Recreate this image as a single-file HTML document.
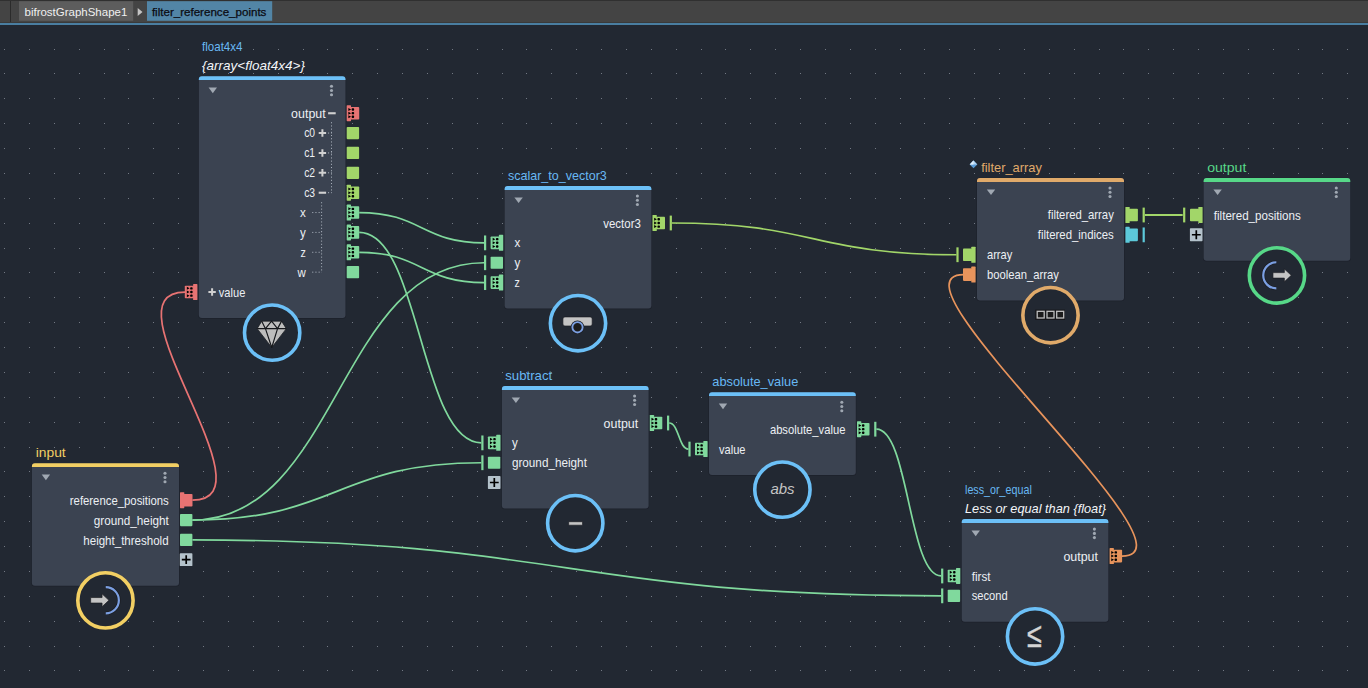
<!DOCTYPE html><html><head><meta charset="utf-8"><title>filter_reference_points</title>
<style>html,body{margin:0;padding:0;background:#222832;overflow:hidden}svg{display:block;font-family:"Liberation Sans",sans-serif}</style></head><body>
<svg width="1368" height="688" viewBox="0 0 1368 688">
<rect width="1368" height="688" fill="#222832"/>
<path d="M4 49.5h1M29 49.5h1M54 49.5h1M79 49.5h1M104 49.5h1M128 49.5h1M153 49.5h1M178 49.5h1M203 49.5h1M228 49.5h1M253 49.5h1M278 49.5h1M303 49.5h1M327 49.5h1M352 49.5h1M377 49.5h1M402 49.5h1M427 49.5h1M452 49.5h1M477 49.5h1M502 49.5h1M526 49.5h1M551 49.5h1M576 49.5h1M601 49.5h1M626 49.5h1M651 49.5h1M676 49.5h1M701 49.5h1M725 49.5h1M750 49.5h1M775 49.5h1M800 49.5h1M825 49.5h1M850 49.5h1M875 49.5h1M900 49.5h1M924 49.5h1M949 49.5h1M974 49.5h1M999 49.5h1M1024 49.5h1M1049 49.5h1M1074 49.5h1M1099 49.5h1M1123 49.5h1M1148 49.5h1M1173 49.5h1M1198 49.5h1M1223 49.5h1M1248 49.5h1M1273 49.5h1M1298 49.5h1M1322 49.5h1M1347 49.5h1M4 73.5h1M29 73.5h1M54 73.5h1M79 73.5h1M104 73.5h1M128 73.5h1M153 73.5h1M178 73.5h1M203 73.5h1M228 73.5h1M253 73.5h1M278 73.5h1M303 73.5h1M327 73.5h1M352 73.5h1M377 73.5h1M402 73.5h1M427 73.5h1M452 73.5h1M477 73.5h1M502 73.5h1M526 73.5h1M551 73.5h1M576 73.5h1M601 73.5h1M626 73.5h1M651 73.5h1M676 73.5h1M701 73.5h1M725 73.5h1M750 73.5h1M775 73.5h1M800 73.5h1M825 73.5h1M850 73.5h1M875 73.5h1M900 73.5h1M924 73.5h1M949 73.5h1M974 73.5h1M999 73.5h1M1024 73.5h1M1049 73.5h1M1074 73.5h1M1099 73.5h1M1123 73.5h1M1148 73.5h1M1173 73.5h1M1198 73.5h1M1223 73.5h1M1248 73.5h1M1273 73.5h1M1298 73.5h1M1322 73.5h1M1347 73.5h1M4 98.5h1M29 98.5h1M54 98.5h1M79 98.5h1M104 98.5h1M128 98.5h1M153 98.5h1M178 98.5h1M203 98.5h1M228 98.5h1M253 98.5h1M278 98.5h1M303 98.5h1M327 98.5h1M352 98.5h1M377 98.5h1M402 98.5h1M427 98.5h1M452 98.5h1M477 98.5h1M502 98.5h1M526 98.5h1M551 98.5h1M576 98.5h1M601 98.5h1M626 98.5h1M651 98.5h1M676 98.5h1M701 98.5h1M725 98.5h1M750 98.5h1M775 98.5h1M800 98.5h1M825 98.5h1M850 98.5h1M875 98.5h1M900 98.5h1M924 98.5h1M949 98.5h1M974 98.5h1M999 98.5h1M1024 98.5h1M1049 98.5h1M1074 98.5h1M1099 98.5h1M1123 98.5h1M1148 98.5h1M1173 98.5h1M1198 98.5h1M1223 98.5h1M1248 98.5h1M1273 98.5h1M1298 98.5h1M1322 98.5h1M1347 98.5h1M4 123.5h1M29 123.5h1M54 123.5h1M79 123.5h1M104 123.5h1M128 123.5h1M153 123.5h1M178 123.5h1M203 123.5h1M228 123.5h1M253 123.5h1M278 123.5h1M303 123.5h1M327 123.5h1M352 123.5h1M377 123.5h1M402 123.5h1M427 123.5h1M452 123.5h1M477 123.5h1M502 123.5h1M526 123.5h1M551 123.5h1M576 123.5h1M601 123.5h1M626 123.5h1M651 123.5h1M676 123.5h1M701 123.5h1M725 123.5h1M750 123.5h1M775 123.5h1M800 123.5h1M825 123.5h1M850 123.5h1M875 123.5h1M900 123.5h1M924 123.5h1M949 123.5h1M974 123.5h1M999 123.5h1M1024 123.5h1M1049 123.5h1M1074 123.5h1M1099 123.5h1M1123 123.5h1M1148 123.5h1M1173 123.5h1M1198 123.5h1M1223 123.5h1M1248 123.5h1M1273 123.5h1M1298 123.5h1M1322 123.5h1M1347 123.5h1M4 148.5h1M29 148.5h1M54 148.5h1M79 148.5h1M104 148.5h1M128 148.5h1M153 148.5h1M178 148.5h1M203 148.5h1M228 148.5h1M253 148.5h1M278 148.5h1M303 148.5h1M327 148.5h1M352 148.5h1M377 148.5h1M402 148.5h1M427 148.5h1M452 148.5h1M477 148.5h1M502 148.5h1M526 148.5h1M551 148.5h1M576 148.5h1M601 148.5h1M626 148.5h1M651 148.5h1M676 148.5h1M701 148.5h1M725 148.5h1M750 148.5h1M775 148.5h1M800 148.5h1M825 148.5h1M850 148.5h1M875 148.5h1M900 148.5h1M924 148.5h1M949 148.5h1M974 148.5h1M999 148.5h1M1024 148.5h1M1049 148.5h1M1074 148.5h1M1099 148.5h1M1123 148.5h1M1148 148.5h1M1173 148.5h1M1198 148.5h1M1223 148.5h1M1248 148.5h1M1273 148.5h1M1298 148.5h1M1322 148.5h1M1347 148.5h1M4 173.5h1M29 173.5h1M54 173.5h1M79 173.5h1M104 173.5h1M128 173.5h1M153 173.5h1M178 173.5h1M203 173.5h1M228 173.5h1M253 173.5h1M278 173.5h1M303 173.5h1M327 173.5h1M352 173.5h1M377 173.5h1M402 173.5h1M427 173.5h1M452 173.5h1M477 173.5h1M502 173.5h1M526 173.5h1M551 173.5h1M576 173.5h1M601 173.5h1M626 173.5h1M651 173.5h1M676 173.5h1M701 173.5h1M725 173.5h1M750 173.5h1M775 173.5h1M800 173.5h1M825 173.5h1M850 173.5h1M875 173.5h1M900 173.5h1M924 173.5h1M949 173.5h1M974 173.5h1M999 173.5h1M1024 173.5h1M1049 173.5h1M1074 173.5h1M1099 173.5h1M1123 173.5h1M1148 173.5h1M1173 173.5h1M1198 173.5h1M1223 173.5h1M1248 173.5h1M1273 173.5h1M1298 173.5h1M1322 173.5h1M1347 173.5h1M4 198.5h1M29 198.5h1M54 198.5h1M79 198.5h1M104 198.5h1M128 198.5h1M153 198.5h1M178 198.5h1M203 198.5h1M228 198.5h1M253 198.5h1M278 198.5h1M303 198.5h1M327 198.5h1M352 198.5h1M377 198.5h1M402 198.5h1M427 198.5h1M452 198.5h1M477 198.5h1M502 198.5h1M526 198.5h1M551 198.5h1M576 198.5h1M601 198.5h1M626 198.5h1M651 198.5h1M676 198.5h1M701 198.5h1M725 198.5h1M750 198.5h1M775 198.5h1M800 198.5h1M825 198.5h1M850 198.5h1M875 198.5h1M900 198.5h1M924 198.5h1M949 198.5h1M974 198.5h1M999 198.5h1M1024 198.5h1M1049 198.5h1M1074 198.5h1M1099 198.5h1M1123 198.5h1M1148 198.5h1M1173 198.5h1M1198 198.5h1M1223 198.5h1M1248 198.5h1M1273 198.5h1M1298 198.5h1M1322 198.5h1M1347 198.5h1M4 223.5h1M29 223.5h1M54 223.5h1M79 223.5h1M104 223.5h1M128 223.5h1M153 223.5h1M178 223.5h1M203 223.5h1M228 223.5h1M253 223.5h1M278 223.5h1M303 223.5h1M327 223.5h1M352 223.5h1M377 223.5h1M402 223.5h1M427 223.5h1M452 223.5h1M477 223.5h1M502 223.5h1M526 223.5h1M551 223.5h1M576 223.5h1M601 223.5h1M626 223.5h1M651 223.5h1M676 223.5h1M701 223.5h1M725 223.5h1M750 223.5h1M775 223.5h1M800 223.5h1M825 223.5h1M850 223.5h1M875 223.5h1M900 223.5h1M924 223.5h1M949 223.5h1M974 223.5h1M999 223.5h1M1024 223.5h1M1049 223.5h1M1074 223.5h1M1099 223.5h1M1123 223.5h1M1148 223.5h1M1173 223.5h1M1198 223.5h1M1223 223.5h1M1248 223.5h1M1273 223.5h1M1298 223.5h1M1322 223.5h1M1347 223.5h1M4 248.5h1M29 248.5h1M54 248.5h1M79 248.5h1M104 248.5h1M128 248.5h1M153 248.5h1M178 248.5h1M203 248.5h1M228 248.5h1M253 248.5h1M278 248.5h1M303 248.5h1M327 248.5h1M352 248.5h1M377 248.5h1M402 248.5h1M427 248.5h1M452 248.5h1M477 248.5h1M502 248.5h1M526 248.5h1M551 248.5h1M576 248.5h1M601 248.5h1M626 248.5h1M651 248.5h1M676 248.5h1M701 248.5h1M725 248.5h1M750 248.5h1M775 248.5h1M800 248.5h1M825 248.5h1M850 248.5h1M875 248.5h1M900 248.5h1M924 248.5h1M949 248.5h1M974 248.5h1M999 248.5h1M1024 248.5h1M1049 248.5h1M1074 248.5h1M1099 248.5h1M1123 248.5h1M1148 248.5h1M1173 248.5h1M1198 248.5h1M1223 248.5h1M1248 248.5h1M1273 248.5h1M1298 248.5h1M1322 248.5h1M1347 248.5h1M4 272.5h1M29 272.5h1M54 272.5h1M79 272.5h1M104 272.5h1M128 272.5h1M153 272.5h1M178 272.5h1M203 272.5h1M228 272.5h1M253 272.5h1M278 272.5h1M303 272.5h1M327 272.5h1M352 272.5h1M377 272.5h1M402 272.5h1M427 272.5h1M452 272.5h1M477 272.5h1M502 272.5h1M526 272.5h1M551 272.5h1M576 272.5h1M601 272.5h1M626 272.5h1M651 272.5h1M676 272.5h1M701 272.5h1M725 272.5h1M750 272.5h1M775 272.5h1M800 272.5h1M825 272.5h1M850 272.5h1M875 272.5h1M900 272.5h1M924 272.5h1M949 272.5h1M974 272.5h1M999 272.5h1M1024 272.5h1M1049 272.5h1M1074 272.5h1M1099 272.5h1M1123 272.5h1M1148 272.5h1M1173 272.5h1M1198 272.5h1M1223 272.5h1M1248 272.5h1M1273 272.5h1M1298 272.5h1M1322 272.5h1M1347 272.5h1M4 297.5h1M29 297.5h1M54 297.5h1M79 297.5h1M104 297.5h1M128 297.5h1M153 297.5h1M178 297.5h1M203 297.5h1M228 297.5h1M253 297.5h1M278 297.5h1M303 297.5h1M327 297.5h1M352 297.5h1M377 297.5h1M402 297.5h1M427 297.5h1M452 297.5h1M477 297.5h1M502 297.5h1M526 297.5h1M551 297.5h1M576 297.5h1M601 297.5h1M626 297.5h1M651 297.5h1M676 297.5h1M701 297.5h1M725 297.5h1M750 297.5h1M775 297.5h1M800 297.5h1M825 297.5h1M850 297.5h1M875 297.5h1M900 297.5h1M924 297.5h1M949 297.5h1M974 297.5h1M999 297.5h1M1024 297.5h1M1049 297.5h1M1074 297.5h1M1099 297.5h1M1123 297.5h1M1148 297.5h1M1173 297.5h1M1198 297.5h1M1223 297.5h1M1248 297.5h1M1273 297.5h1M1298 297.5h1M1322 297.5h1M1347 297.5h1M4 322.5h1M29 322.5h1M54 322.5h1M79 322.5h1M104 322.5h1M128 322.5h1M153 322.5h1M178 322.5h1M203 322.5h1M228 322.5h1M253 322.5h1M278 322.5h1M303 322.5h1M327 322.5h1M352 322.5h1M377 322.5h1M402 322.5h1M427 322.5h1M452 322.5h1M477 322.5h1M502 322.5h1M526 322.5h1M551 322.5h1M576 322.5h1M601 322.5h1M626 322.5h1M651 322.5h1M676 322.5h1M701 322.5h1M725 322.5h1M750 322.5h1M775 322.5h1M800 322.5h1M825 322.5h1M850 322.5h1M875 322.5h1M900 322.5h1M924 322.5h1M949 322.5h1M974 322.5h1M999 322.5h1M1024 322.5h1M1049 322.5h1M1074 322.5h1M1099 322.5h1M1123 322.5h1M1148 322.5h1M1173 322.5h1M1198 322.5h1M1223 322.5h1M1248 322.5h1M1273 322.5h1M1298 322.5h1M1322 322.5h1M1347 322.5h1M4 347.5h1M29 347.5h1M54 347.5h1M79 347.5h1M104 347.5h1M128 347.5h1M153 347.5h1M178 347.5h1M203 347.5h1M228 347.5h1M253 347.5h1M278 347.5h1M303 347.5h1M327 347.5h1M352 347.5h1M377 347.5h1M402 347.5h1M427 347.5h1M452 347.5h1M477 347.5h1M502 347.5h1M526 347.5h1M551 347.5h1M576 347.5h1M601 347.5h1M626 347.5h1M651 347.5h1M676 347.5h1M701 347.5h1M725 347.5h1M750 347.5h1M775 347.5h1M800 347.5h1M825 347.5h1M850 347.5h1M875 347.5h1M900 347.5h1M924 347.5h1M949 347.5h1M974 347.5h1M999 347.5h1M1024 347.5h1M1049 347.5h1M1074 347.5h1M1099 347.5h1M1123 347.5h1M1148 347.5h1M1173 347.5h1M1198 347.5h1M1223 347.5h1M1248 347.5h1M1273 347.5h1M1298 347.5h1M1322 347.5h1M1347 347.5h1M4 372.5h1M29 372.5h1M54 372.5h1M79 372.5h1M104 372.5h1M128 372.5h1M153 372.5h1M178 372.5h1M203 372.5h1M228 372.5h1M253 372.5h1M278 372.5h1M303 372.5h1M327 372.5h1M352 372.5h1M377 372.5h1M402 372.5h1M427 372.5h1M452 372.5h1M477 372.5h1M502 372.5h1M526 372.5h1M551 372.5h1M576 372.5h1M601 372.5h1M626 372.5h1M651 372.5h1M676 372.5h1M701 372.5h1M725 372.5h1M750 372.5h1M775 372.5h1M800 372.5h1M825 372.5h1M850 372.5h1M875 372.5h1M900 372.5h1M924 372.5h1M949 372.5h1M974 372.5h1M999 372.5h1M1024 372.5h1M1049 372.5h1M1074 372.5h1M1099 372.5h1M1123 372.5h1M1148 372.5h1M1173 372.5h1M1198 372.5h1M1223 372.5h1M1248 372.5h1M1273 372.5h1M1298 372.5h1M1322 372.5h1M1347 372.5h1M4 397.5h1M29 397.5h1M54 397.5h1M79 397.5h1M104 397.5h1M128 397.5h1M153 397.5h1M178 397.5h1M203 397.5h1M228 397.5h1M253 397.5h1M278 397.5h1M303 397.5h1M327 397.5h1M352 397.5h1M377 397.5h1M402 397.5h1M427 397.5h1M452 397.5h1M477 397.5h1M502 397.5h1M526 397.5h1M551 397.5h1M576 397.5h1M601 397.5h1M626 397.5h1M651 397.5h1M676 397.5h1M701 397.5h1M725 397.5h1M750 397.5h1M775 397.5h1M800 397.5h1M825 397.5h1M850 397.5h1M875 397.5h1M900 397.5h1M924 397.5h1M949 397.5h1M974 397.5h1M999 397.5h1M1024 397.5h1M1049 397.5h1M1074 397.5h1M1099 397.5h1M1123 397.5h1M1148 397.5h1M1173 397.5h1M1198 397.5h1M1223 397.5h1M1248 397.5h1M1273 397.5h1M1298 397.5h1M1322 397.5h1M1347 397.5h1M4 422.5h1M29 422.5h1M54 422.5h1M79 422.5h1M104 422.5h1M128 422.5h1M153 422.5h1M178 422.5h1M203 422.5h1M228 422.5h1M253 422.5h1M278 422.5h1M303 422.5h1M327 422.5h1M352 422.5h1M377 422.5h1M402 422.5h1M427 422.5h1M452 422.5h1M477 422.5h1M502 422.5h1M526 422.5h1M551 422.5h1M576 422.5h1M601 422.5h1M626 422.5h1M651 422.5h1M676 422.5h1M701 422.5h1M725 422.5h1M750 422.5h1M775 422.5h1M800 422.5h1M825 422.5h1M850 422.5h1M875 422.5h1M900 422.5h1M924 422.5h1M949 422.5h1M974 422.5h1M999 422.5h1M1024 422.5h1M1049 422.5h1M1074 422.5h1M1099 422.5h1M1123 422.5h1M1148 422.5h1M1173 422.5h1M1198 422.5h1M1223 422.5h1M1248 422.5h1M1273 422.5h1M1298 422.5h1M1322 422.5h1M1347 422.5h1M4 447.5h1M29 447.5h1M54 447.5h1M79 447.5h1M104 447.5h1M128 447.5h1M153 447.5h1M178 447.5h1M203 447.5h1M228 447.5h1M253 447.5h1M278 447.5h1M303 447.5h1M327 447.5h1M352 447.5h1M377 447.5h1M402 447.5h1M427 447.5h1M452 447.5h1M477 447.5h1M502 447.5h1M526 447.5h1M551 447.5h1M576 447.5h1M601 447.5h1M626 447.5h1M651 447.5h1M676 447.5h1M701 447.5h1M725 447.5h1M750 447.5h1M775 447.5h1M800 447.5h1M825 447.5h1M850 447.5h1M875 447.5h1M900 447.5h1M924 447.5h1M949 447.5h1M974 447.5h1M999 447.5h1M1024 447.5h1M1049 447.5h1M1074 447.5h1M1099 447.5h1M1123 447.5h1M1148 447.5h1M1173 447.5h1M1198 447.5h1M1223 447.5h1M1248 447.5h1M1273 447.5h1M1298 447.5h1M1322 447.5h1M1347 447.5h1M4 471.5h1M29 471.5h1M54 471.5h1M79 471.5h1M104 471.5h1M128 471.5h1M153 471.5h1M178 471.5h1M203 471.5h1M228 471.5h1M253 471.5h1M278 471.5h1M303 471.5h1M327 471.5h1M352 471.5h1M377 471.5h1M402 471.5h1M427 471.5h1M452 471.5h1M477 471.5h1M502 471.5h1M526 471.5h1M551 471.5h1M576 471.5h1M601 471.5h1M626 471.5h1M651 471.5h1M676 471.5h1M701 471.5h1M725 471.5h1M750 471.5h1M775 471.5h1M800 471.5h1M825 471.5h1M850 471.5h1M875 471.5h1M900 471.5h1M924 471.5h1M949 471.5h1M974 471.5h1M999 471.5h1M1024 471.5h1M1049 471.5h1M1074 471.5h1M1099 471.5h1M1123 471.5h1M1148 471.5h1M1173 471.5h1M1198 471.5h1M1223 471.5h1M1248 471.5h1M1273 471.5h1M1298 471.5h1M1322 471.5h1M1347 471.5h1M4 496.5h1M29 496.5h1M54 496.5h1M79 496.5h1M104 496.5h1M128 496.5h1M153 496.5h1M178 496.5h1M203 496.5h1M228 496.5h1M253 496.5h1M278 496.5h1M303 496.5h1M327 496.5h1M352 496.5h1M377 496.5h1M402 496.5h1M427 496.5h1M452 496.5h1M477 496.5h1M502 496.5h1M526 496.5h1M551 496.5h1M576 496.5h1M601 496.5h1M626 496.5h1M651 496.5h1M676 496.5h1M701 496.5h1M725 496.5h1M750 496.5h1M775 496.5h1M800 496.5h1M825 496.5h1M850 496.5h1M875 496.5h1M900 496.5h1M924 496.5h1M949 496.5h1M974 496.5h1M999 496.5h1M1024 496.5h1M1049 496.5h1M1074 496.5h1M1099 496.5h1M1123 496.5h1M1148 496.5h1M1173 496.5h1M1198 496.5h1M1223 496.5h1M1248 496.5h1M1273 496.5h1M1298 496.5h1M1322 496.5h1M1347 496.5h1M4 521.5h1M29 521.5h1M54 521.5h1M79 521.5h1M104 521.5h1M128 521.5h1M153 521.5h1M178 521.5h1M203 521.5h1M228 521.5h1M253 521.5h1M278 521.5h1M303 521.5h1M327 521.5h1M352 521.5h1M377 521.5h1M402 521.5h1M427 521.5h1M452 521.5h1M477 521.5h1M502 521.5h1M526 521.5h1M551 521.5h1M576 521.5h1M601 521.5h1M626 521.5h1M651 521.5h1M676 521.5h1M701 521.5h1M725 521.5h1M750 521.5h1M775 521.5h1M800 521.5h1M825 521.5h1M850 521.5h1M875 521.5h1M900 521.5h1M924 521.5h1M949 521.5h1M974 521.5h1M999 521.5h1M1024 521.5h1M1049 521.5h1M1074 521.5h1M1099 521.5h1M1123 521.5h1M1148 521.5h1M1173 521.5h1M1198 521.5h1M1223 521.5h1M1248 521.5h1M1273 521.5h1M1298 521.5h1M1322 521.5h1M1347 521.5h1M4 546.5h1M29 546.5h1M54 546.5h1M79 546.5h1M104 546.5h1M128 546.5h1M153 546.5h1M178 546.5h1M203 546.5h1M228 546.5h1M253 546.5h1M278 546.5h1M303 546.5h1M327 546.5h1M352 546.5h1M377 546.5h1M402 546.5h1M427 546.5h1M452 546.5h1M477 546.5h1M502 546.5h1M526 546.5h1M551 546.5h1M576 546.5h1M601 546.5h1M626 546.5h1M651 546.5h1M676 546.5h1M701 546.5h1M725 546.5h1M750 546.5h1M775 546.5h1M800 546.5h1M825 546.5h1M850 546.5h1M875 546.5h1M900 546.5h1M924 546.5h1M949 546.5h1M974 546.5h1M999 546.5h1M1024 546.5h1M1049 546.5h1M1074 546.5h1M1099 546.5h1M1123 546.5h1M1148 546.5h1M1173 546.5h1M1198 546.5h1M1223 546.5h1M1248 546.5h1M1273 546.5h1M1298 546.5h1M1322 546.5h1M1347 546.5h1M4 571.5h1M29 571.5h1M54 571.5h1M79 571.5h1M104 571.5h1M128 571.5h1M153 571.5h1M178 571.5h1M203 571.5h1M228 571.5h1M253 571.5h1M278 571.5h1M303 571.5h1M327 571.5h1M352 571.5h1M377 571.5h1M402 571.5h1M427 571.5h1M452 571.5h1M477 571.5h1M502 571.5h1M526 571.5h1M551 571.5h1M576 571.5h1M601 571.5h1M626 571.5h1M651 571.5h1M676 571.5h1M701 571.5h1M725 571.5h1M750 571.5h1M775 571.5h1M800 571.5h1M825 571.5h1M850 571.5h1M875 571.5h1M900 571.5h1M924 571.5h1M949 571.5h1M974 571.5h1M999 571.5h1M1024 571.5h1M1049 571.5h1M1074 571.5h1M1099 571.5h1M1123 571.5h1M1148 571.5h1M1173 571.5h1M1198 571.5h1M1223 571.5h1M1248 571.5h1M1273 571.5h1M1298 571.5h1M1322 571.5h1M1347 571.5h1M4 596.5h1M29 596.5h1M54 596.5h1M79 596.5h1M104 596.5h1M128 596.5h1M153 596.5h1M178 596.5h1M203 596.5h1M228 596.5h1M253 596.5h1M278 596.5h1M303 596.5h1M327 596.5h1M352 596.5h1M377 596.5h1M402 596.5h1M427 596.5h1M452 596.5h1M477 596.5h1M502 596.5h1M526 596.5h1M551 596.5h1M576 596.5h1M601 596.5h1M626 596.5h1M651 596.5h1M676 596.5h1M701 596.5h1M725 596.5h1M750 596.5h1M775 596.5h1M800 596.5h1M825 596.5h1M850 596.5h1M875 596.5h1M900 596.5h1M924 596.5h1M949 596.5h1M974 596.5h1M999 596.5h1M1024 596.5h1M1049 596.5h1M1074 596.5h1M1099 596.5h1M1123 596.5h1M1148 596.5h1M1173 596.5h1M1198 596.5h1M1223 596.5h1M1248 596.5h1M1273 596.5h1M1298 596.5h1M1322 596.5h1M1347 596.5h1M4 621.5h1M29 621.5h1M54 621.5h1M79 621.5h1M104 621.5h1M128 621.5h1M153 621.5h1M178 621.5h1M203 621.5h1M228 621.5h1M253 621.5h1M278 621.5h1M303 621.5h1M327 621.5h1M352 621.5h1M377 621.5h1M402 621.5h1M427 621.5h1M452 621.5h1M477 621.5h1M502 621.5h1M526 621.5h1M551 621.5h1M576 621.5h1M601 621.5h1M626 621.5h1M651 621.5h1M676 621.5h1M701 621.5h1M725 621.5h1M750 621.5h1M775 621.5h1M800 621.5h1M825 621.5h1M850 621.5h1M875 621.5h1M900 621.5h1M924 621.5h1M949 621.5h1M974 621.5h1M999 621.5h1M1024 621.5h1M1049 621.5h1M1074 621.5h1M1099 621.5h1M1123 621.5h1M1148 621.5h1M1173 621.5h1M1198 621.5h1M1223 621.5h1M1248 621.5h1M1273 621.5h1M1298 621.5h1M1322 621.5h1M1347 621.5h1M4 646.5h1M29 646.5h1M54 646.5h1M79 646.5h1M104 646.5h1M128 646.5h1M153 646.5h1M178 646.5h1M203 646.5h1M228 646.5h1M253 646.5h1M278 646.5h1M303 646.5h1M327 646.5h1M352 646.5h1M377 646.5h1M402 646.5h1M427 646.5h1M452 646.5h1M477 646.5h1M502 646.5h1M526 646.5h1M551 646.5h1M576 646.5h1M601 646.5h1M626 646.5h1M651 646.5h1M676 646.5h1M701 646.5h1M725 646.5h1M750 646.5h1M775 646.5h1M800 646.5h1M825 646.5h1M850 646.5h1M875 646.5h1M900 646.5h1M924 646.5h1M949 646.5h1M974 646.5h1M999 646.5h1M1024 646.5h1M1049 646.5h1M1074 646.5h1M1099 646.5h1M1123 646.5h1M1148 646.5h1M1173 646.5h1M1198 646.5h1M1223 646.5h1M1248 646.5h1M1273 646.5h1M1298 646.5h1M1322 646.5h1M1347 646.5h1M4 670.5h1M29 670.5h1M54 670.5h1M79 670.5h1M104 670.5h1M128 670.5h1M153 670.5h1M178 670.5h1M203 670.5h1M228 670.5h1M253 670.5h1M278 670.5h1M303 670.5h1M327 670.5h1M352 670.5h1M377 670.5h1M402 670.5h1M427 670.5h1M452 670.5h1M477 670.5h1M502 670.5h1M526 670.5h1M551 670.5h1M576 670.5h1M601 670.5h1M626 670.5h1M651 670.5h1M676 670.5h1M701 670.5h1M725 670.5h1M750 670.5h1M775 670.5h1M800 670.5h1M825 670.5h1M850 670.5h1M875 670.5h1M900 670.5h1M924 670.5h1M949 670.5h1M974 670.5h1M999 670.5h1M1024 670.5h1M1049 670.5h1M1074 670.5h1M1099 670.5h1M1123 670.5h1M1148 670.5h1M1173 670.5h1M1198 670.5h1M1223 670.5h1M1248 670.5h1M1273 670.5h1M1298 670.5h1M1322 670.5h1M1347 670.5h1" stroke="#737984" stroke-width="1" fill="none" shape-rendering="crispEdges"/>
<path d="M192.40 500.20C277.40 500.20 100.00 292.03 185.00 292.03" stroke="#e87373" stroke-width="1.7" fill="none"/>
<path d="M359.20 212.55C421.60 212.55 421.60 242.87 484.00 242.87" stroke="#80d99d" stroke-width="1.7" fill="none"/>
<path d="M359.20 232.42C420.25 232.42 420.25 442.87 481.30 442.87" stroke="#80d99d" stroke-width="1.7" fill="none"/>
<path d="M359.20 252.29C421.60 252.29 421.60 282.61 484.00 282.61" stroke="#80d99d" stroke-width="1.7" fill="none"/>
<path d="M192.40 520.07C338.20 520.07 338.20 262.74 484.00 262.74" stroke="#80d99d" stroke-width="1.7" fill="none"/>
<path d="M192.40 520.07C336.85 520.07 336.85 462.74 481.30 462.74" stroke="#80d99d" stroke-width="1.7" fill="none"/>
<path d="M192.40 539.94C566.75 539.94 566.75 595.84 941.10 595.84" stroke="#80d99d" stroke-width="1.7" fill="none"/>
<path d="M671.90 223.00C814.15 223.00 814.15 254.74 956.40 254.74" stroke="#a2d669" stroke-width="1.7" fill="none"/>
<path d="M669.20 423.00C678.80 423.00 678.80 449.07 688.40 449.07" stroke="#80d99d" stroke-width="1.7" fill="none"/>
<path d="M876.40 429.20C908.75 429.20 908.75 575.97 941.10 575.97" stroke="#80d99d" stroke-width="1.7" fill="none"/>
<path d="M1122.00 556.10C1208.00 556.10 877.50 274.61 963.50 274.61" stroke="#e8945c" stroke-width="1.7" fill="none"/>
<path d="M1144.8 215.00H1182.7" stroke="#a2d669" stroke-width="1.9" fill="none"/>
<rect x="198.20" y="75.90" width="147.90" height="242.83" rx="3.5" fill="#1d212b"/>
<rect x="198.80" y="76.20" width="146.70" height="241.83" rx="3" fill="#3b4351"/>
<path d="M198.80 80.10V79.20A3 3 0 0 1 201.80 76.20H342.50A3 3 0 0 1 345.50 79.20V80.10Z" fill="#6cc0f7"/>
<path d="M208.60 87.60h8.4l-4.2 5.7z" fill="#a0a8b2"/>
<circle cx="331.50" cy="86.20" r="1.55" fill="#a0a8b2"/>
<circle cx="331.50" cy="90.50" r="1.55" fill="#a0a8b2"/>
<circle cx="331.50" cy="94.70" r="1.55" fill="#a0a8b2"/>
<text x="202.10" y="51.00" font-size="12.2" fill="#68b8f4" textLength="40.30" lengthAdjust="spacingAndGlyphs">float4x4</text>
<text x="202.10" y="70.00" font-size="12.7" fill="#f4f6f9" font-style="italic" textLength="102.80" lengthAdjust="spacingAndGlyphs">{array&lt;float4x4&gt;}</text>
<text x="291.10" y="118.00" font-size="12.2" fill="#eceff3" textLength="34.60" lengthAdjust="spacingAndGlyphs">output</text>
<rect x="328.1" y="112.20" width="7.6" height="2.1" fill="#d0d0d0"/>
<text x="304.20" y="137.00" font-size="12.2" fill="#eceff3" textLength="10.90" lengthAdjust="spacingAndGlyphs">c0</text>
<path d="M318.7 133.07h7.4M322.4 129.37v7.4" stroke="#d0d0d0" stroke-width="2" fill="none"/>
<path d="M328 133.07H332" stroke="#a6aeb9" stroke-width="1" stroke-dasharray="1.1 2.1" fill="none"/>
<text x="304.20" y="157.00" font-size="12.2" fill="#eceff3" textLength="10.90" lengthAdjust="spacingAndGlyphs">c1</text>
<path d="M318.7 152.94h7.4M322.4 149.24v7.4" stroke="#d0d0d0" stroke-width="2" fill="none"/>
<path d="M328 152.94H332" stroke="#a6aeb9" stroke-width="1" stroke-dasharray="1.1 2.1" fill="none"/>
<text x="304.20" y="177.00" font-size="12.2" fill="#eceff3" textLength="10.90" lengthAdjust="spacingAndGlyphs">c2</text>
<path d="M318.7 172.81h7.4M322.4 169.11v7.4" stroke="#d0d0d0" stroke-width="2" fill="none"/>
<path d="M328 172.81H332" stroke="#a6aeb9" stroke-width="1" stroke-dasharray="1.1 2.1" fill="none"/>
<text x="304.20" y="197.00" font-size="12.2" fill="#eceff3" textLength="10.90" lengthAdjust="spacingAndGlyphs">c3</text>
<rect x="318.7" y="191.68" width="7.4" height="2.1" fill="#d0d0d0"/>
<path d="M328 192.68H332" stroke="#a6aeb9" stroke-width="1" stroke-dasharray="1.1 2.1" fill="none"/>
<path d="M331.5 122.20V192.68" stroke="#a6aeb9" stroke-width="1" stroke-dasharray="1.1 2.1" fill="none"/>
<text x="300.10" y="217.00" font-size="12.2" fill="#eceff3" textLength="5.80" lengthAdjust="spacingAndGlyphs">x</text>
<path d="M312.2 212.55H322" stroke="#a6aeb9" stroke-width="1" stroke-dasharray="1.1 2.1" fill="none"/>
<text x="300.10" y="237.00" font-size="12.2" fill="#eceff3" textLength="5.80" lengthAdjust="spacingAndGlyphs">y</text>
<path d="M312.2 232.42H322" stroke="#a6aeb9" stroke-width="1" stroke-dasharray="1.1 2.1" fill="none"/>
<text x="300.60" y="257.00" font-size="12.2" fill="#eceff3" textLength="5.30" lengthAdjust="spacingAndGlyphs">z</text>
<path d="M312.2 252.29H322" stroke="#a6aeb9" stroke-width="1" stroke-dasharray="1.1 2.1" fill="none"/>
<text x="297.60" y="277.00" font-size="12.2" fill="#eceff3" textLength="8.30" lengthAdjust="spacingAndGlyphs">w</text>
<path d="M312.2 272.16H322" stroke="#a6aeb9" stroke-width="1" stroke-dasharray="1.1 2.1" fill="none"/>
<path d="M321.6 202.18V272.16" stroke="#a6aeb9" stroke-width="1" stroke-dasharray="1.1 2.1" fill="none"/>
<path d="M208.4 292.03h7.4M212.1 288.33v7.4" stroke="#d0d0d0" stroke-width="2" fill="none"/>
<text x="218.80" y="297.00" font-size="12.2" fill="#eceff3" textLength="26.50" lengthAdjust="spacingAndGlyphs">value</text>
<rect x="346.70" y="105.20" width="4.3" height="16" rx="0.6" fill="#e87373"/>
<rect x="350.20" y="106.90" width="9" height="12.6" rx="0.8" fill="#e87373"/>
<rect x="351.65" y="108.30" width="2.5" height="2.4" rx="0.9" fill="#020202"/>
<rect x="351.65" y="111.95" width="2.5" height="2.4" rx="0.9" fill="#020202"/>
<rect x="351.65" y="115.60" width="2.5" height="2.4" rx="0.9" fill="#020202"/>
<path d="M348.35 108.00L351.05 109.50L348.35 111.00ZM348.35 111.65L351.05 113.15L348.35 114.65ZM348.35 115.30L351.05 116.80L348.35 118.30Z" fill="#020202"/>
<rect x="346.70" y="126.97" width="12.4" height="12.2" rx="0.8" fill="#a2d669"/>
<rect x="346.70" y="146.84" width="12.4" height="12.2" rx="0.8" fill="#a2d669"/>
<rect x="346.70" y="166.71" width="12.4" height="12.2" rx="0.8" fill="#a2d669"/>
<rect x="346.70" y="184.68" width="4.3" height="16" rx="0.6" fill="#a2d669"/>
<rect x="350.20" y="186.38" width="9" height="12.6" rx="0.8" fill="#a2d669"/>
<rect x="351.65" y="187.78" width="2.5" height="2.4" rx="0.9" fill="#020202"/>
<rect x="351.65" y="191.43" width="2.5" height="2.4" rx="0.9" fill="#020202"/>
<rect x="351.65" y="195.08" width="2.5" height="2.4" rx="0.9" fill="#020202"/>
<path d="M348.35 187.48L351.05 188.98L348.35 190.48ZM348.35 191.13L351.05 192.63L348.35 194.13ZM348.35 194.78L351.05 196.28L348.35 197.78Z" fill="#020202"/>
<rect x="346.70" y="204.55" width="4.3" height="16" rx="0.6" fill="#80d99d"/>
<rect x="350.20" y="206.25" width="9" height="12.6" rx="0.8" fill="#80d99d"/>
<rect x="351.65" y="207.65" width="2.5" height="2.4" rx="0.9" fill="#020202"/>
<rect x="351.65" y="211.30" width="2.5" height="2.4" rx="0.9" fill="#020202"/>
<rect x="351.65" y="214.95" width="2.5" height="2.4" rx="0.9" fill="#020202"/>
<path d="M348.35 207.35L351.05 208.85L348.35 210.35ZM348.35 211.00L351.05 212.50L348.35 214.00ZM348.35 214.65L351.05 216.15L348.35 217.65Z" fill="#020202"/>
<rect x="346.70" y="224.42" width="4.3" height="16" rx="0.6" fill="#80d99d"/>
<rect x="350.20" y="226.12" width="9" height="12.6" rx="0.8" fill="#80d99d"/>
<rect x="351.65" y="227.52" width="2.5" height="2.4" rx="0.9" fill="#020202"/>
<rect x="351.65" y="231.17" width="2.5" height="2.4" rx="0.9" fill="#020202"/>
<rect x="351.65" y="234.82" width="2.5" height="2.4" rx="0.9" fill="#020202"/>
<path d="M348.35 227.22L351.05 228.72L348.35 230.22ZM348.35 230.87L351.05 232.37L348.35 233.87ZM348.35 234.52L351.05 236.02L348.35 237.52Z" fill="#020202"/>
<rect x="346.70" y="244.29" width="4.3" height="16" rx="0.6" fill="#80d99d"/>
<rect x="350.20" y="245.99" width="9" height="12.6" rx="0.8" fill="#80d99d"/>
<rect x="351.65" y="247.39" width="2.5" height="2.4" rx="0.9" fill="#020202"/>
<rect x="351.65" y="251.04" width="2.5" height="2.4" rx="0.9" fill="#020202"/>
<rect x="351.65" y="254.69" width="2.5" height="2.4" rx="0.9" fill="#020202"/>
<path d="M348.35 247.09L351.05 248.59L348.35 250.09ZM348.35 250.74L351.05 252.24L348.35 253.74ZM348.35 254.39L351.05 255.89L348.35 257.39Z" fill="#020202"/>
<rect x="346.70" y="266.06" width="12.4" height="12.2" rx="0.8" fill="#80d99d"/>
<rect x="193.10" y="284.03" width="4.3" height="16" rx="0.6" fill="#e87373"/>
<rect x="184.80" y="285.73" width="9" height="12.6" rx="0.8" fill="#e87373"/>
<rect x="190.15" y="287.13" width="2.5" height="2.4" rx="0.9" fill="#020202"/>
<rect x="190.15" y="290.78" width="2.5" height="2.4" rx="0.9" fill="#020202"/>
<rect x="190.15" y="294.43" width="2.5" height="2.4" rx="0.9" fill="#020202"/>
<path d="M186.85 286.83L189.55 288.33L186.85 289.83ZM186.85 290.48L189.55 291.98L186.85 293.48ZM186.85 294.13L189.55 295.63L186.85 297.13Z" fill="#020202"/>
<circle cx="272.15" cy="332.63" r="27.65" fill="#222832" stroke="#6cc0f7" stroke-width="3.6"/>
<path d="M261.75 321.13H281.55L286.35 328.63L271.75 347.53L257.15 328.63Z" fill="#bdbdbd" stroke="#1b1d22" stroke-width="0.8" stroke-linejoin="round"/>
<path d="M257.15 328.63H286.35M261.75 321.13L265.45 328.63L271.55 321.13L277.55 328.63L281.55 321.13M265.45 328.63L271.75 347.53L277.55 328.63" fill="none" stroke="#15171b" stroke-width="1.15" stroke-linejoin="round"/>
<rect x="31.30" y="462.90" width="148.30" height="123.61" rx="3.5" fill="#1d212b"/>
<rect x="31.90" y="463.20" width="147.10" height="122.61" rx="3" fill="#3b4351"/>
<path d="M31.90 467.10V466.20A3 3 0 0 1 34.90 463.20H176.00A3 3 0 0 1 179.00 466.20V467.10Z" fill="#f2cf63"/>
<path d="M41.70 474.60h8.4l-4.2 5.7z" fill="#a0a8b2"/>
<circle cx="165.00" cy="473.20" r="1.55" fill="#a0a8b2"/>
<circle cx="165.00" cy="477.50" r="1.55" fill="#a0a8b2"/>
<circle cx="165.00" cy="481.70" r="1.55" fill="#a0a8b2"/>
<text x="35.70" y="457.00" font-size="13.5" fill="#f2cf63" textLength="30.00" lengthAdjust="spacingAndGlyphs">input</text>
<text x="69.80" y="505.00" font-size="12.2" fill="#eceff3" textLength="99.00" lengthAdjust="spacingAndGlyphs">reference_positions</text>
<text x="93.80" y="525.00" font-size="12.2" fill="#eceff3" textLength="75.00" lengthAdjust="spacingAndGlyphs">ground_height</text>
<text x="83.30" y="545.00" font-size="12.2" fill="#eceff3" textLength="85.30" lengthAdjust="spacingAndGlyphs">height_threshold</text>
<rect x="180.00" y="492.20" width="4.3" height="16" rx="0.6" fill="#e87373"/>
<rect x="183.50" y="493.90" width="9" height="12.6" rx="0.8" fill="#e87373"/>
<rect x="180.00" y="513.97" width="12.4" height="12.2" rx="0.8" fill="#80d99d"/>
<rect x="180.00" y="533.84" width="12.4" height="12.2" rx="0.8" fill="#80d99d"/>
<rect x="179.80" y="553.21" width="12.6" height="12.9" rx="0.7" fill="#b4c2cb"/>
<path d="M181.80 559.71H190.60M186.20 555.31V564.11" stroke="#000" stroke-width="1.7" fill="none"/>
<circle cx="105.45" cy="600.41" r="27.65" fill="#222832" stroke="#f2cf63" stroke-width="3.6"/>
<path d="M90.65 597.56h11.4v-3.7l6.9 6.45-6.9 6.45v-3.7h-11.4z" fill="#c4c4c4" stroke="#1b1d22" stroke-width="0.7"/>
<path d="M105.75 587.11A13.1 13.1 0 0 1 105.75 613.31" fill="none" stroke="#1b1d22" stroke-width="3.6"/>
<path d="M105.75 587.11A13.1 13.1 0 0 1 105.75 613.31" fill="none" stroke="#7b9fe2" stroke-width="2.2"/>
<rect x="504.00" y="185.70" width="148.00" height="123.61" rx="3.5" fill="#1d212b"/>
<rect x="504.60" y="186.00" width="146.80" height="122.61" rx="3" fill="#3b4351"/>
<path d="M504.60 189.90V189.00A3 3 0 0 1 507.60 186.00H648.40A3 3 0 0 1 651.40 189.00V189.90Z" fill="#6cc0f7"/>
<path d="M514.40 197.40h8.4l-4.2 5.7z" fill="#a0a8b2"/>
<circle cx="637.40" cy="196.00" r="1.55" fill="#a0a8b2"/>
<circle cx="637.40" cy="200.30" r="1.55" fill="#a0a8b2"/>
<circle cx="637.40" cy="204.50" r="1.55" fill="#a0a8b2"/>
<text x="507.90" y="180.00" font-size="13.5" fill="#68b8f4" textLength="98.90" lengthAdjust="spacingAndGlyphs">scalar_to_vector3</text>
<text x="603.30" y="228.00" font-size="12.2" fill="#eceff3" textLength="37.50" lengthAdjust="spacingAndGlyphs">vector3</text>
<text x="514.60" y="247.00" font-size="12.2" fill="#eceff3" textLength="5.80" lengthAdjust="spacingAndGlyphs">x</text>
<text x="514.60" y="267.00" font-size="12.2" fill="#eceff3" textLength="5.80" lengthAdjust="spacingAndGlyphs">y</text>
<text x="514.60" y="287.00" font-size="12.2" fill="#eceff3" textLength="5.30" lengthAdjust="spacingAndGlyphs">z</text>
<rect x="652.50" y="215.00" width="4.3" height="16" rx="0.6" fill="#a2d669"/>
<rect x="656.00" y="216.70" width="9" height="12.6" rx="0.8" fill="#a2d669"/>
<rect x="657.45" y="218.10" width="2.5" height="2.4" rx="0.9" fill="#020202"/>
<rect x="657.45" y="221.75" width="2.5" height="2.4" rx="0.9" fill="#020202"/>
<rect x="657.45" y="225.40" width="2.5" height="2.4" rx="0.9" fill="#020202"/>
<path d="M654.15 217.80L656.85 219.30L654.15 220.80ZM654.15 221.45L656.85 222.95L654.15 224.45ZM654.15 225.10L656.85 226.60L654.15 228.10Z" fill="#020202"/>
<rect x="669.70" y="215.60" width="2.2" height="14.8" fill="#a2d669"/>
<rect x="498.90" y="234.87" width="4.3" height="16" rx="0.6" fill="#80d99d"/>
<rect x="490.60" y="236.57" width="9" height="12.6" rx="0.8" fill="#80d99d"/>
<rect x="495.95" y="237.97" width="2.5" height="2.4" rx="0.9" fill="#020202"/>
<rect x="495.95" y="241.62" width="2.5" height="2.4" rx="0.9" fill="#020202"/>
<rect x="495.95" y="245.27" width="2.5" height="2.4" rx="0.9" fill="#020202"/>
<path d="M492.65 237.67L495.35 239.17L492.65 240.67ZM492.65 241.32L495.35 242.82L492.65 244.32ZM492.65 244.97L495.35 246.47L492.65 247.97Z" fill="#020202"/>
<rect x="484.00" y="235.47" width="2.2" height="14.8" fill="#80d99d"/>
<rect x="490.60" y="256.64" width="12.4" height="12.2" rx="0.8" fill="#80d99d"/>
<rect x="484.00" y="255.34" width="2.2" height="14.8" fill="#80d99d"/>
<rect x="498.90" y="274.61" width="4.3" height="16" rx="0.6" fill="#80d99d"/>
<rect x="490.60" y="276.31" width="9" height="12.6" rx="0.8" fill="#80d99d"/>
<rect x="495.95" y="277.71" width="2.5" height="2.4" rx="0.9" fill="#020202"/>
<rect x="495.95" y="281.36" width="2.5" height="2.4" rx="0.9" fill="#020202"/>
<rect x="495.95" y="285.01" width="2.5" height="2.4" rx="0.9" fill="#020202"/>
<path d="M492.65 277.41L495.35 278.91L492.65 280.41ZM492.65 281.06L495.35 282.56L492.65 284.06ZM492.65 284.71L495.35 286.21L492.65 287.71Z" fill="#020202"/>
<rect x="484.00" y="275.21" width="2.2" height="14.8" fill="#80d99d"/>
<circle cx="578.00" cy="323.21" r="27.65" fill="#222832" stroke="#6cc0f7" stroke-width="3.6"/>
<rect x="562.90" y="316.91" width="29.3" height="9.1" rx="2" fill="#c4c4c4" stroke="#1b1d22" stroke-width="0.7"/>
<circle cx="577.50" cy="327.31" r="6.8" fill="#1b1d22"/>
<circle cx="577.50" cy="327.31" r="5.15" fill="#1c1c1c" stroke="#7b9fe2" stroke-width="1.9"/>
<rect x="501.30" y="385.70" width="147.90" height="123.61" rx="3.5" fill="#1d212b"/>
<rect x="501.90" y="386.00" width="146.70" height="122.61" rx="3" fill="#3b4351"/>
<path d="M501.90 389.90V389.00A3 3 0 0 1 504.90 386.00H645.60A3 3 0 0 1 648.60 389.00V389.90Z" fill="#6cc0f7"/>
<path d="M511.70 397.40h8.4l-4.2 5.7z" fill="#a0a8b2"/>
<circle cx="634.60" cy="396.00" r="1.55" fill="#a0a8b2"/>
<circle cx="634.60" cy="400.30" r="1.55" fill="#a0a8b2"/>
<circle cx="634.60" cy="404.50" r="1.55" fill="#a0a8b2"/>
<text x="505.20" y="380.00" font-size="13.5" fill="#68b8f4" textLength="47.00" lengthAdjust="spacingAndGlyphs">subtract</text>
<text x="603.60" y="428.00" font-size="12.2" fill="#eceff3" textLength="34.60" lengthAdjust="spacingAndGlyphs">output</text>
<text x="511.90" y="447.00" font-size="12.2" fill="#eceff3" textLength="5.80" lengthAdjust="spacingAndGlyphs">y</text>
<text x="511.90" y="467.00" font-size="12.2" fill="#eceff3" textLength="75.00" lengthAdjust="spacingAndGlyphs">ground_height</text>
<rect x="649.80" y="415.00" width="4.3" height="16" rx="0.6" fill="#80d99d"/>
<rect x="653.30" y="416.70" width="9" height="12.6" rx="0.8" fill="#80d99d"/>
<rect x="654.75" y="418.10" width="2.5" height="2.4" rx="0.9" fill="#020202"/>
<rect x="654.75" y="421.75" width="2.5" height="2.4" rx="0.9" fill="#020202"/>
<rect x="654.75" y="425.40" width="2.5" height="2.4" rx="0.9" fill="#020202"/>
<path d="M651.45 417.80L654.15 419.30L651.45 420.80ZM651.45 421.45L654.15 422.95L651.45 424.45ZM651.45 425.10L654.15 426.60L651.45 428.10Z" fill="#020202"/>
<rect x="667.00" y="415.60" width="2.2" height="14.8" fill="#80d99d"/>
<rect x="496.20" y="434.87" width="4.3" height="16" rx="0.6" fill="#80d99d"/>
<rect x="487.90" y="436.57" width="9" height="12.6" rx="0.8" fill="#80d99d"/>
<rect x="493.25" y="437.97" width="2.5" height="2.4" rx="0.9" fill="#020202"/>
<rect x="493.25" y="441.62" width="2.5" height="2.4" rx="0.9" fill="#020202"/>
<rect x="493.25" y="445.27" width="2.5" height="2.4" rx="0.9" fill="#020202"/>
<path d="M489.95 437.67L492.65 439.17L489.95 440.67ZM489.95 441.32L492.65 442.82L489.95 444.32ZM489.95 444.97L492.65 446.47L489.95 447.97Z" fill="#020202"/>
<rect x="481.30" y="435.47" width="2.2" height="14.8" fill="#80d99d"/>
<rect x="487.90" y="456.64" width="12.4" height="12.2" rx="0.8" fill="#80d99d"/>
<rect x="481.30" y="455.34" width="2.2" height="14.8" fill="#80d99d"/>
<rect x="487.90" y="476.01" width="12.6" height="12.9" rx="0.7" fill="#b4c2cb"/>
<path d="M489.90 482.51H498.70M494.30 478.11V486.91" stroke="#000" stroke-width="1.7" fill="none"/>
<circle cx="575.25" cy="523.21" r="27.65" fill="#222832" stroke="#6cc0f7" stroke-width="3.6"/>
<rect x="568.65" y="521.71" width="13.9" height="3.5" rx="0.4" fill="#c4c4c4" stroke="#1b1d22" stroke-width="0.7"/>
<rect x="708.40" y="391.90" width="148.00" height="83.87" rx="3.5" fill="#1d212b"/>
<rect x="709.00" y="392.20" width="146.80" height="82.87" rx="3" fill="#3b4351"/>
<path d="M709.00 396.10V395.20A3 3 0 0 1 712.00 392.20H852.80A3 3 0 0 1 855.80 395.20V396.10Z" fill="#6cc0f7"/>
<path d="M718.80 403.60h8.4l-4.2 5.7z" fill="#a0a8b2"/>
<circle cx="841.80" cy="402.20" r="1.55" fill="#a0a8b2"/>
<circle cx="841.80" cy="406.50" r="1.55" fill="#a0a8b2"/>
<circle cx="841.80" cy="410.70" r="1.55" fill="#a0a8b2"/>
<text x="712.30" y="386.00" font-size="13.5" fill="#68b8f4" textLength="86.00" lengthAdjust="spacingAndGlyphs">absolute_value</text>
<text x="769.90" y="434.00" font-size="12.2" fill="#eceff3" textLength="75.50" lengthAdjust="spacingAndGlyphs">absolute_value</text>
<text x="719.00" y="454.00" font-size="12.2" fill="#eceff3" textLength="26.50" lengthAdjust="spacingAndGlyphs">value</text>
<rect x="857.00" y="421.20" width="4.3" height="16" rx="0.6" fill="#80d99d"/>
<rect x="860.50" y="422.90" width="9" height="12.6" rx="0.8" fill="#80d99d"/>
<rect x="861.95" y="424.30" width="2.5" height="2.4" rx="0.9" fill="#020202"/>
<rect x="861.95" y="427.95" width="2.5" height="2.4" rx="0.9" fill="#020202"/>
<rect x="861.95" y="431.60" width="2.5" height="2.4" rx="0.9" fill="#020202"/>
<path d="M858.65 424.00L861.35 425.50L858.65 427.00ZM858.65 427.65L861.35 429.15L858.65 430.65ZM858.65 431.30L861.35 432.80L858.65 434.30Z" fill="#020202"/>
<rect x="874.20" y="421.80" width="2.2" height="14.8" fill="#80d99d"/>
<rect x="703.30" y="441.07" width="4.3" height="16" rx="0.6" fill="#80d99d"/>
<rect x="695.00" y="442.77" width="9" height="12.6" rx="0.8" fill="#80d99d"/>
<rect x="700.35" y="444.17" width="2.5" height="2.4" rx="0.9" fill="#020202"/>
<rect x="700.35" y="447.82" width="2.5" height="2.4" rx="0.9" fill="#020202"/>
<rect x="700.35" y="451.47" width="2.5" height="2.4" rx="0.9" fill="#020202"/>
<path d="M697.05 443.87L699.75 445.37L697.05 446.87ZM697.05 447.52L699.75 449.02L697.05 450.52ZM697.05 451.17L699.75 452.67L697.05 454.17Z" fill="#020202"/>
<rect x="688.40" y="441.67" width="2.2" height="14.8" fill="#80d99d"/>
<circle cx="782.40" cy="489.67" r="27.65" fill="#222832" stroke="#6cc0f7" stroke-width="3.6"/>
<text x="770.40" y="493.77" font-size="15.4" fill="#c4c4c4" font-style="italic" textLength="24.20" lengthAdjust="spacingAndGlyphs">abs</text>
<rect x="976.40" y="177.70" width="148.20" height="123.61" rx="3.5" fill="#1d212b"/>
<rect x="977.00" y="178.00" width="147.00" height="122.61" rx="3" fill="#3b4351"/>
<path d="M977.00 181.90V181.00A3 3 0 0 1 980.00 178.00H1121.00A3 3 0 0 1 1124.00 181.00V181.90Z" fill="#e0aa6a"/>
<path d="M986.80 189.40h8.4l-4.2 5.7z" fill="#a0a8b2"/>
<circle cx="1110.00" cy="188.00" r="1.55" fill="#a0a8b2"/>
<circle cx="1110.00" cy="192.30" r="1.55" fill="#a0a8b2"/>
<circle cx="1110.00" cy="196.50" r="1.55" fill="#a0a8b2"/>
<text x="981.20" y="172.00" font-size="13.5" fill="#e0aa6a" textLength="60.70" lengthAdjust="spacingAndGlyphs">filter_array</text>
<text x="1047.80" y="219.00" font-size="12.2" fill="#eceff3" textLength="66.00" lengthAdjust="spacingAndGlyphs">filtered_array</text>
<text x="1037.80" y="239.00" font-size="12.2" fill="#eceff3" textLength="76.00" lengthAdjust="spacingAndGlyphs">filtered_indices</text>
<text x="987.00" y="259.00" font-size="12.2" fill="#eceff3" textLength="25.30" lengthAdjust="spacingAndGlyphs">array</text>
<text x="987.00" y="279.00" font-size="12.2" fill="#eceff3" textLength="71.80" lengthAdjust="spacingAndGlyphs">boolean_array</text>
<rect x="1125.40" y="207.00" width="4.3" height="16" rx="0.6" fill="#a2d669"/>
<rect x="1128.90" y="208.70" width="9" height="12.6" rx="0.8" fill="#a2d669"/>
<rect x="1142.60" y="207.60" width="2.2" height="14.8" fill="#a2d669"/>
<rect x="1125.40" y="226.87" width="4.3" height="16" rx="0.6" fill="#5cc9da"/>
<rect x="1128.90" y="228.57" width="9" height="12.6" rx="0.8" fill="#5cc9da"/>
<rect x="1142.60" y="227.47" width="2.2" height="14.8" fill="#5cc9da"/>
<rect x="971.30" y="246.74" width="4.3" height="16" rx="0.6" fill="#a2d669"/>
<rect x="963.00" y="248.44" width="9" height="12.6" rx="0.8" fill="#a2d669"/>
<rect x="956.40" y="247.34" width="2.2" height="14.8" fill="#a2d669"/>
<rect x="971.30" y="266.61" width="4.3" height="16" rx="0.6" fill="#e8945c"/>
<rect x="963.00" y="268.31" width="9" height="12.6" rx="0.8" fill="#e8945c"/>
<circle cx="1050.50" cy="315.21" r="27.65" fill="#222832" stroke="#e0aa6a" stroke-width="3.6"/>
<rect x="1035.20" y="309.61" width="29.8" height="10.3" fill="#17181b"/>
<rect x="1037.20" y="311.31" width="7" height="6.7" fill="#1c1c1c" stroke="#c0c0c0" stroke-width="1.3"/>
<rect x="1047.00" y="311.31" width="7" height="6.7" fill="#1c1c1c" stroke="#c0c0c0" stroke-width="1.3"/>
<rect x="1056.70" y="311.31" width="7" height="6.7" fill="#1c1c1c" stroke="#c0c0c0" stroke-width="1.3"/>
<path d="M973.5 160.6l3.8 3.8-3.8 3.8-3.8-3.8z" fill="#5a9bd6"/><path d="M973.5 160.6l3.8 3.8h-7.6z" fill="#b4d6f4"/><path d="M973.5 160.6v3.8h-3.8z" fill="#e2effb"/>
<rect x="1203.00" y="177.70" width="147.90" height="83.87" rx="3.5" fill="#1d212b"/>
<rect x="1203.60" y="178.00" width="146.70" height="82.87" rx="3" fill="#3b4351"/>
<path d="M1203.60 181.90V181.00A3 3 0 0 1 1206.60 178.00H1347.30A3 3 0 0 1 1350.30 181.00V181.90Z" fill="#57d888"/>
<path d="M1213.40 189.40h8.4l-4.2 5.7z" fill="#a0a8b2"/>
<circle cx="1336.30" cy="188.00" r="1.55" fill="#a0a8b2"/>
<circle cx="1336.30" cy="192.30" r="1.55" fill="#a0a8b2"/>
<circle cx="1336.30" cy="196.50" r="1.55" fill="#a0a8b2"/>
<text x="1207.20" y="172.00" font-size="13.5" fill="#57d888" textLength="39.20" lengthAdjust="spacingAndGlyphs">output</text>
<text x="1213.80" y="220.00" font-size="12.2" fill="#eceff3" textLength="87.00" lengthAdjust="spacingAndGlyphs">filtered_positions</text>
<rect x="1198.30" y="207.00" width="4.3" height="16" rx="0.6" fill="#a2d669"/>
<rect x="1190.00" y="208.70" width="9" height="12.6" rx="0.8" fill="#a2d669"/>
<rect x="1183.10" y="207.60" width="2.2" height="14.8" fill="#a2d669"/>
<rect x="1189.90" y="228.27" width="12.6" height="12.9" rx="0.7" fill="#b4c2cb"/>
<path d="M1191.90 234.77H1200.70M1196.30 230.37V239.17" stroke="#000" stroke-width="1.7" fill="none"/>
<circle cx="1276.95" cy="275.47" r="27.65" fill="#222832" stroke="#57d888" stroke-width="3.6"/>
<path d="M1272.95 272.62h11.4v-3.7l6.9 6.45-6.9 6.45v-3.7h-11.4z" fill="#c4c4c4" stroke="#1b1d22" stroke-width="0.7"/>
<path d="M1276.35 262.27A13.1 13.1 0 0 0 1276.35 288.47" fill="none" stroke="#1b1d22" stroke-width="3.6"/>
<path d="M1276.35 262.27A13.1 13.1 0 0 0 1276.35 288.47" fill="none" stroke="#7b9fe2" stroke-width="2.2"/>
<rect x="961.10" y="518.80" width="147.90" height="103.74" rx="3.5" fill="#1d212b"/>
<rect x="961.70" y="519.10" width="146.70" height="102.74" rx="3" fill="#3b4351"/>
<path d="M961.70 523.00V522.10A3 3 0 0 1 964.70 519.10H1105.40A3 3 0 0 1 1108.40 522.10V523.00Z" fill="#6cc0f7"/>
<path d="M971.50 530.50h8.4l-4.2 5.7z" fill="#a0a8b2"/>
<circle cx="1094.40" cy="529.10" r="1.55" fill="#a0a8b2"/>
<circle cx="1094.40" cy="533.40" r="1.55" fill="#a0a8b2"/>
<circle cx="1094.40" cy="537.60" r="1.55" fill="#a0a8b2"/>
<text x="965.00" y="494.00" font-size="12.2" fill="#68b8f4" textLength="66.80" lengthAdjust="spacingAndGlyphs">less_or_equal</text>
<text x="965.00" y="513.00" font-size="12.7" fill="#f4f6f9" font-style="italic" textLength="141.00" lengthAdjust="spacingAndGlyphs">Less or equal than {float}</text>
<text x="1063.40" y="561.00" font-size="12.2" fill="#eceff3" textLength="34.60" lengthAdjust="spacingAndGlyphs">output</text>
<text x="971.70" y="581.00" font-size="12.2" fill="#eceff3" textLength="18.80" lengthAdjust="spacingAndGlyphs">first</text>
<text x="971.70" y="600.00" font-size="12.2" fill="#eceff3" textLength="36.00" lengthAdjust="spacingAndGlyphs">second</text>
<rect x="1109.60" y="548.10" width="4.3" height="16" rx="0.6" fill="#e8945c"/>
<rect x="1113.10" y="549.80" width="9" height="12.6" rx="0.8" fill="#e8945c"/>
<rect x="1114.55" y="551.20" width="2.5" height="2.4" rx="0.9" fill="#020202"/>
<rect x="1114.55" y="554.85" width="2.5" height="2.4" rx="0.9" fill="#020202"/>
<rect x="1114.55" y="558.50" width="2.5" height="2.4" rx="0.9" fill="#020202"/>
<path d="M1111.25 550.90L1113.95 552.40L1111.25 553.90ZM1111.25 554.55L1113.95 556.05L1111.25 557.55ZM1111.25 558.20L1113.95 559.70L1111.25 561.20Z" fill="#020202"/>
<rect x="956.00" y="567.97" width="4.3" height="16" rx="0.6" fill="#80d99d"/>
<rect x="947.70" y="569.67" width="9" height="12.6" rx="0.8" fill="#80d99d"/>
<rect x="953.05" y="571.07" width="2.5" height="2.4" rx="0.9" fill="#020202"/>
<rect x="953.05" y="574.72" width="2.5" height="2.4" rx="0.9" fill="#020202"/>
<rect x="953.05" y="578.37" width="2.5" height="2.4" rx="0.9" fill="#020202"/>
<path d="M949.75 570.77L952.45 572.27L949.75 573.77ZM949.75 574.42L952.45 575.92L949.75 577.42ZM949.75 578.07L952.45 579.57L949.75 581.07Z" fill="#020202"/>
<rect x="941.10" y="568.57" width="2.2" height="14.8" fill="#80d99d"/>
<rect x="947.70" y="589.74" width="12.4" height="12.2" rx="0.8" fill="#80d99d"/>
<rect x="941.10" y="588.44" width="2.2" height="14.8" fill="#80d99d"/>
<circle cx="1035.05" cy="636.44" r="27.65" fill="#222832" stroke="#6cc0f7" stroke-width="3.6"/>
<g stroke="#d4d4d4" stroke-width="0.35">
<text x="1026.95" y="647.04" font-size="35.5" fill="#d4d4d4" textLength="14.90" lengthAdjust="spacingAndGlyphs">≤</text>
</g>
<rect x="0" y="0" width="1368" height="23" fill="#444444"/>
<rect x="0" y="0" width="1368" height="1" fill="#303030"/>
<rect x="0" y="22" width="1368" height="1" fill="#3a3a3a"/>
<rect x="0" y="23" width="1368" height="2" fill="#4a7ea1"/>
<rect x="10" y="1" width="1" height="21" fill="#2b2b2b"/>
<rect x="19" y="1.2" width="114.2" height="19.6" fill="#5d5d5d"/>
<rect x="147" y="1.2" width="125.2" height="19.6" fill="#5285a6"/>
<path d="M137.7 7.9l4.8 4.1-4.8 4.1z" fill="#c4c4c4"/>
<text x="24.50" y="16.00" font-size="11.2" fill="#f0f0f0" textLength="102.80" lengthAdjust="spacingAndGlyphs">bifrostGraphShape1</text>
<g stroke="#0b0b12" stroke-width="0.25">
<text x="151.90" y="16.00" font-size="11.2" fill="#0b0b12" textLength="114.50" lengthAdjust="spacingAndGlyphs">filter_reference_points</text>
</g>
</svg></body></html>
